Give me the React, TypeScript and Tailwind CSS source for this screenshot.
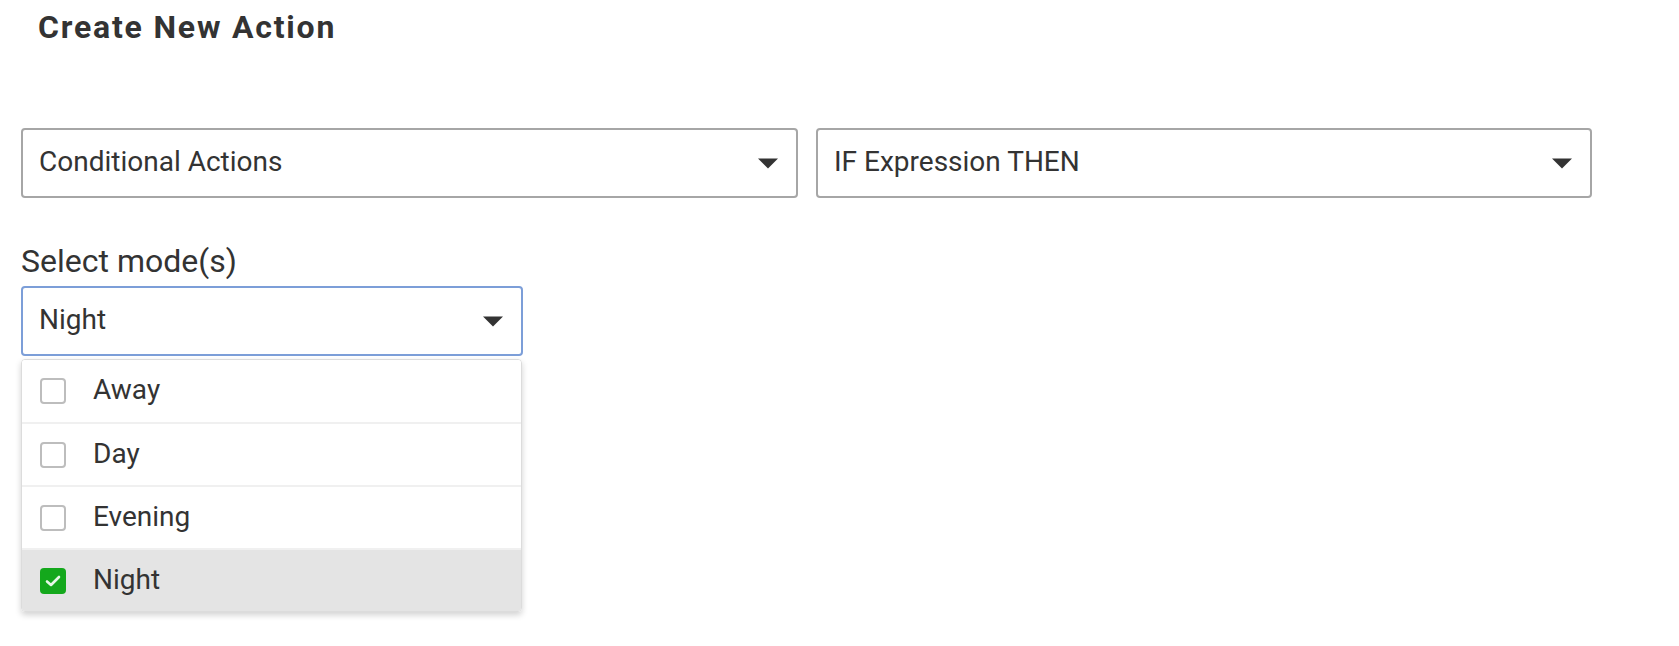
import React from "react";

function Arrow() {
  return (
    <svg width="20" height="11" viewBox="0 0 20 11" className="shrink-0">
      <polygon points="0,0.5 20,0.5 10,10.5" fill="#333333" />
    </svg>
  );
}

function Select({ label, width, focused }: { label: string; width: string; focused?: boolean }) {
  return (
    <div
      className={`${width} h-[70px] border-2 rounded-[4px] flex items-center justify-between pl-[16px] pr-[18px] bg-white ${
        focused ? "border-[#7c9ed8]" : "border-[#a6a6a6]"
      }`}
    >
      <span className="text-[28px] leading-[33px] pb-[4px] text-[#333333]">{label}</span>
      <Arrow />
    </div>
  );
}

function Checkbox({ checked }: { checked?: boolean }) {
  if (checked) {
    return (
      <div className="w-[26px] h-[26px] rounded-[4px] bg-[#14a81c] flex items-center justify-center shrink-0">
        <svg width="16" height="12" viewBox="0 0 16 12">
          <polyline points="2,6.5 6,10 14,2" fill="none" stroke="#e6f7e6" strokeWidth="2.6" strokeLinecap="round" strokeLinejoin="round" />
        </svg>
      </div>
    );
  }
  return <div className="w-[26px] h-[26px] rounded-[4px] border-2 border-[#bdbdbd] bg-white shrink-0" />;
}

function Row({ label, checked, first }: { label: string; checked?: boolean; first?: boolean }) {
  return (
    <div
      className={`flex items-center gap-[27px] pl-[18px] ${
        first ? "h-[62px]" : "h-[63px] border-t-2 border-[#f0f0f0]"
      } ${checked ? "bg-[#e4e4e4]" : "bg-white"}`}
    >
      <Checkbox checked={checked} />
      <span className="text-[28px] leading-[33px] text-[#333333] pb-[3px]">{label}</span>
    </div>
  );
}

export default function App() {
  return (
    <div className="w-[1679px] h-[646px] bg-white font-['Roboto','Liberation_Sans',sans-serif] text-[#333333] overflow-hidden">
      <div className="pl-[38px] pt-[7px]">
        <h1 className="text-[32px] leading-[40px] font-bold tracking-[1.8px] text-[#333333]">Create New Action</h1>
      </div>
      <div className="flex gap-[18px] pl-[21px] mt-[81px]">
        <Select label="Conditional Actions" width="w-[777px]" />
        <Select label="IF Expression THEN" width="w-[776px]" />
      </div>
      <div className="pl-[21px] mt-[44px]">
        <div className="text-[32px] leading-[38px] text-[#333333]">Select mode(s)</div>
        <div className="mt-[6px]">
          <Select label="Night" width="w-[502px]" focused />
        </div>
        <div className="mt-[3px] w-[501px] border border-[#dcdcdc] rounded-[4px] overflow-hidden shadow-[0_3px_6px_rgba(0,0,0,0.18)]">
          <Row label="Away" first />
          <Row label="Day" />
          <Row label="Evening" />
          <Row label="Night" checked />
        </div>
      </div>
    </div>
  );
}
